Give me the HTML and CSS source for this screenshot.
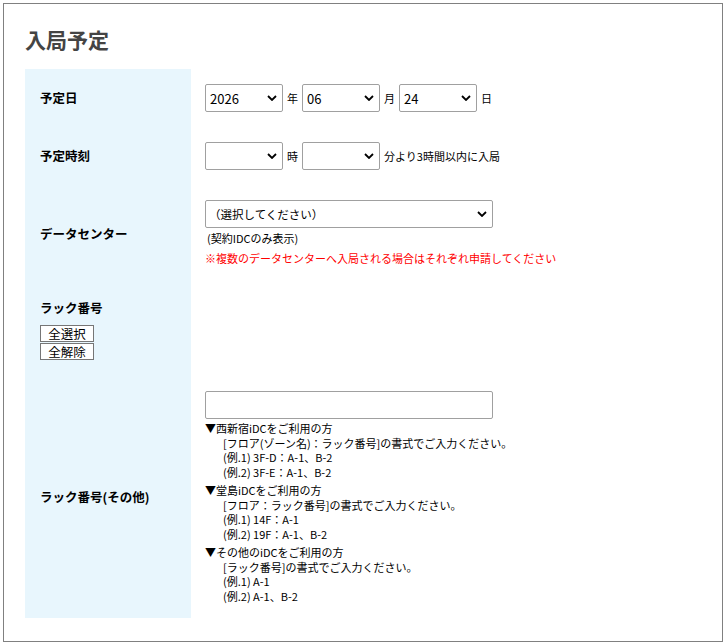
FILE: index.html
```html
<!DOCTYPE html>
<html lang="ja">
<head>
<meta charset="utf-8">
<title>入局予定</title>
<link rel="stylesheet" href="styles.css">
</head>
<body>
<div class="page">
  <h1 class="title">入局予定</h1>
  <table class="form">
    <tr>
      <th>予定日</th>
      <td>
        <div class="inline">
          <span class="sel w78"><select><option>2026</option></select><svg class="chev" viewBox="0 0 10 6"><path d="M1 1l4 4 4-4" fill="none" stroke="#000" stroke-width="1.8"/></svg></span>
          <span class="unit">年</span>
          <span class="sel w78"><select><option>06</option></select><svg class="chev" viewBox="0 0 10 6"><path d="M1 1l4 4 4-4" fill="none" stroke="#000" stroke-width="1.8"/></svg></span>
          <span class="unit">月</span>
          <span class="sel w78"><select><option>24</option></select><svg class="chev" viewBox="0 0 10 6"><path d="M1 1l4 4 4-4" fill="none" stroke="#000" stroke-width="1.8"/></svg></span>
          <span class="unit">日</span>
        </div>
      </td>
    </tr>
    <tr>
      <th>予定時刻</th>
      <td>
        <div class="inline">
          <span class="sel w78"><select><option></option></select><svg class="chev" viewBox="0 0 10 6"><path d="M1 1l4 4 4-4" fill="none" stroke="#000" stroke-width="1.8"/></svg></span>
          <span class="unit">時</span>
          <span class="sel w78"><select><option></option></select><svg class="chev" viewBox="0 0 10 6"><path d="M1 1l4 4 4-4" fill="none" stroke="#000" stroke-width="1.8"/></svg></span>
          <span class="unit">分より3時間以内に入局</span>
        </div>
      </td>
    </tr>
    <tr>
      <th>データセンター</th>
      <td>
        <span class="sel w288"><select class="sel-jp"><option>（選択してください）</option></select><svg class="chev" viewBox="0 0 10 6"><path d="M1 1l4 4 4-4" fill="none" stroke="#000" stroke-width="1.8"/></svg></span>
        <p class="note">(契約IDCのみ表示)</p>
        <p class="note warn">※複数のデータセンターへ入局される場合はそれぞれ申請してください</p>
      </td>
    </tr>
    <tr>
      <th>
        <div class="rack-label">ラック番号</div>
        <button class="btn" type="button">全選択</button>
        <button class="btn" type="button">全解除</button>
      </th>
      <td></td>
    </tr>
    <tr>
      <th>ラック番号(その他)</th>
      <td>
        <input class="text-in" type="text">
        <div class="help">
          <div class="group">
            <div>▼西新宿iDCをご利用の方</div>
            <div class="ind">[フロア(ゾーン名)：ラック番号]の書式でご入力ください。</div>
            <div class="ind">(例.1) 3F-D：A-1、B-2</div>
            <div class="ind">(例.2) 3F-E：A-1、B-2</div>
          </div>
          <div class="group">
            <div>▼堂島iDCをご利用の方</div>
            <div class="ind">[フロア：ラック番号]の書式でご入力ください。</div>
            <div class="ind">(例.1) 14F：A-1</div>
            <div class="ind">(例.2) 19F：A-1、B-2</div>
          </div>
          <div class="group">
            <div>▼その他のiDCをご利用の方</div>
            <div class="ind">[ラック番号]の書式でご入力ください。</div>
            <div class="ind">(例.1) A-1</div>
            <div class="ind">(例.2) A-1、B-2</div>
          </div>
        </div>
      </td>
    </tr>
  </table>
</div>
</body>
</html>
```
FILE: styles.css
```css
* { box-sizing: border-box; }
html, body { margin: 0; padding: 0; background: #fff; }
body {
  font-family: "Noto Sans CJK JP", sans-serif;
  font-size: 11px;
  color: #000;
}
.page {
  margin: 3px;
  border: 1px solid #808080;
  padding: 20px 21px 23px;
}
.title {
  margin: 0 0 15px;
  font-size: 21px;
  line-height: 30px;
  font-weight: bold;
  color: #444;
}
.form {
  border-collapse: collapse;
  width: 100%;
}
.form th {
  width: 166px;
  background: #e8f6fd;
  text-align: left;
  vertical-align: middle;
  padding: 15px 15px;
  font-size: 12.5px;
  font-weight: bold;
  line-height: 20px;
}
.form td {
  padding: 15px 14px;
  vertical-align: top;
  line-height: 20px;
}
.inline {
  display: flex;
  align-items: center;
  gap: 4px;
  height: 28px;
}
.unit { font-size: 11px; line-height: 20px; }
.sel {
  position: relative;
  display: inline-block;
  height: 28px;
  vertical-align: top;
}
.sel select {
  appearance: none;
  -webkit-appearance: none;
  width: 100%;
  height: 28px;
  border: 1px solid #a0a0a0;
  border-radius: 2px;
  background: #fff;
  font-family: "Noto Sans CJK JP", sans-serif;
  font-size: 13px;
  color: #000;
  padding: 0 4px;
  margin: 0;
}
.sel select.sel-jp { font-size: 11.5px; padding-left: 3px; }
.sel .chev {
  position: absolute;
  right: 6px;
  top: 11px;
  width: 10px;
  height: 6px;
  pointer-events: none;
}
.w78 { width: 78px; }
.w288 { width: 288px; display: block; }
.note { margin: 0; font-size: 11px; line-height: 20px; padding-left: 2px; }
.warn { color: #ff0000; padding-left: 0; }
.rack-label { line-height: 20px; margin-bottom: 7px; }
.btn {
  display: block;
  width: 54px;
  height: 17px;
  margin: 0 0 1px;
  padding: 0;
  border: 1px solid #767676;
  background: #fff;
  font-family: "Noto Sans CJK JP", sans-serif;
  font-size: 12.5px;
  line-height: 14px;
  font-weight: normal;
  color: #000;
  overflow: visible;
}
.text-in {
  display: block;
  width: 288px;
  height: 28px;
  border: 1px solid #a0a0a0;
  border-radius: 2px;
  margin: 0 0 2px;
  padding: 0 4px;
}
.help { font-size: 11px; line-height: 14.5px; }
.group + .group { margin-top: 4px; }
.ind { padding-left: 18px; }
```
